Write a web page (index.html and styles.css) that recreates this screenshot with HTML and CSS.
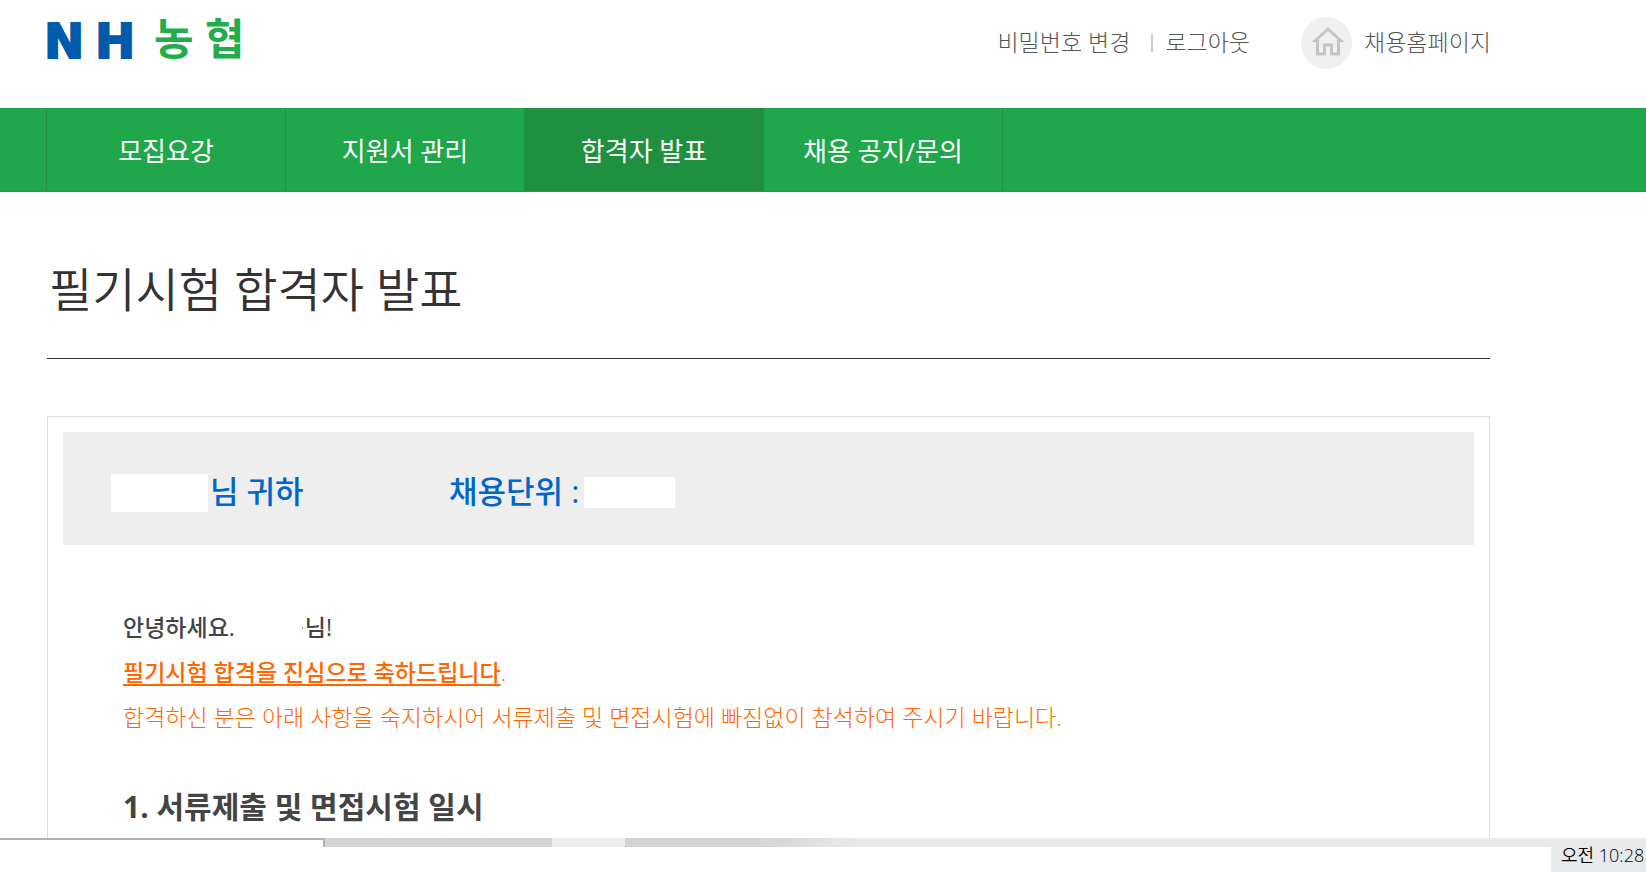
FILE: index.html
```
<!DOCTYPE html>
<html lang="ko">
<head>
<meta charset="utf-8">
<title>필기시험 합격자 발표</title>
<link rel="stylesheet" href="styles.css">
</head>
<body>
<div class="page">
  <header class="header">
    <a class="logo" href="#" aria-label="NH농협">
      <svg width="208" height="68" viewBox="0 -16 208 68" aria-hidden="true">
        <text class="logo-latin" y="35"><tspan x="-3">N</tspan><tspan x="48">H</tspan></text>
        <text class="logo-hangul" y="32"><tspan x="107">농</tspan><tspan x="158">협</tspan></text>
      </svg>
    </a>
    <nav class="utility">
      <a href="#">비밀번호 변경</a>
      <span class="divider"></span>
      <a href="#">로그아웃</a>
      <a class="home" href="#">
        <svg class="home-icon" width="51" height="52" viewBox="0 0 51 52" aria-hidden="true">
          <ellipse cx="25.500" cy="26" rx="25.500" ry="26" fill="#f0f0f0"/>
          <path d="M14.500 23.500 27 12l12.500 11.500H37.500V37H30.500V28H23.500V37H16.500V23.500Z" fill="none" stroke="#c4c4c4" stroke-width="3"/>
        </svg>
        <span>채용홈페이지</span>
      </a>
    </nav>
  </header>
  <nav class="menu">
    <a href="#">모집요강</a>
    <a href="#">지원서 관리</a>
    <a class="active" href="#" aria-current="page">합격자 발표</a>
    <a href="#">채용 공지/문의</a>
  </nav>
  <main class="main">
    <h1 class="title">필기시험 합격자 발표</h1>
    <section class="card">
      <div class="recipient">
        <p class="recipient-name"><span class="mask mask-name"></span>님 귀하</p>
        <p class="recipient-unit">채용단위 :<span class="mask mask-unit"></span></p>
      </div>
      <div class="notice">
        <p class="strong">안녕하세요.<span class="blank"></span>님!</p>
        <p class="accent"><strong class="congrats">필기시험 합격을 진심으로 축하드립니다</strong>.</p>
        <p class="accent">합격하신 분은 아래 사항을 숙지하시어 서류제출 및 면접시험에 빠짐없이 참석하여 주시기 바랍니다.</p>
        <h2 class="subtitle">1. 서류제출 및 면접시험 일시</h2>
      </div>
    </section>
  </main>
</div>
<footer class="taskbar">
  <div class="search"></div>
  <div class="apps"><span class="app-active"></span></div>
  <time class="clock">오전 10:28</time>
</footer>
</body>
</html>
```
FILE: styles.css
```
* { box-sizing: border-box; }

body {
  margin: 0;
  height: 100vh;
  display: flex;
  flex-direction: column;
  overflow: hidden;
  background: #fff;
  color: #444;
  font-family: "Open Sans", "Noto Sans CJK KR", sans-serif;
  font-size: 23px;
  font-weight: 300;
}

h1, h2, p { margin: 0; }
a { color: inherit; text-decoration: none; }

.page { flex: 1; min-height: 0; overflow: hidden; }

.header {
  display: flex;
  justify-content: space-between;
  align-items: flex-start;
  height: 108px;
  padding: 7px 155px 0 47px;
}
.logo svg { display: block; overflow: visible; }
.logo-latin {
  font: bold 48px "DejaVu Sans", sans-serif;
  fill: #005bac;
  stroke: #005bac;
  stroke-width: 2px;
}
.logo-hangul { font: bold 43px "Noto Sans CJK KR", sans-serif; fill: #22ac4b; }

.utility {
  display: flex;
  align-items: center;
  height: 52px;
  margin-top: 10px;
  color: #555;
  line-height: 32px;
  white-space: nowrap;
}
.utility > a:not(.home), .home span { padding-bottom: 2px; }
.divider { width: 2px; height: 18px; margin: 0 12px 0 21px; background: #ccc; }
.home { display: flex; align-items: center; gap: 12px; margin-left: 51px; }

.menu {
  display: flex;
  height: 84px;
  padding-left: 46px;
  background: #20a64b;
  border-bottom: 1px solid #1f9e48;
  color: #fff;
  font-size: 26px;
  font-weight: 400;
}
.menu a {
  display: flex;
  justify-content: center;
  align-items: center;
  width: 239px;
  border-left: 1px solid #1f9242;
}
.menu a:last-child { width: 240px; border-right: 1px solid #1f9242; }
.menu .active { background: #1f8f40; }

.main { padding: 0 156px 0 47px; }
.title {
  padding: 60px 0 32px 2px;
  border-bottom: 1px solid #333;
  color: #333;
  font-size: 47px;
  font-weight: 350;
  line-height: 74px;
}

.card {
  margin-top: 57px;
  min-height: 600px;
  padding: 15px;
  border: 1px solid #ddd;
}
.recipient {
  display: flex;
  height: 113px;
  padding: 2px 48px 0;
  align-items: center;
  background: #eee;
  color: #06c;
  font-size: 31px;
  font-weight: 500;
}
.recipient p { display: flex; align-items: center; }
.recipient-name { width: 338px; }
.mask { margin-top: 6px; background: #fff; }
.mask-name { width: 97px; height: 38px; margin-right: 2px; }
.mask-unit { width: 91px; height: 31px; margin-left: 5px; }

.notice { padding: 60px 60px 0; line-height: 45px; }
.strong { font-weight: 500; }
.blank {
  display: inline-block;
  width: 70px;
  height: 9px;
  border-right: 2px solid #fff;
  background: linear-gradient(#4a90d9, #4a90d9) right top / 1px 2px no-repeat;
}
.accent { color: #f60; }
.congrats {
  font-weight: 500;
  text-decoration: underline;
  text-decoration-thickness: 2px;
  text-underline-offset: 3px;
}
.subtitle { margin-top: 44px; font-size: 30px; font-weight: 700; }

.taskbar {
  display: flex;
  align-items: flex-start;
  height: 34px;
  background: #fff;
}
.search {
  width: 325px;
  height: 9px;
  border-top: 2px solid #b3b3b3;
  border-right: 2px solid #b3b3b3;
}
.apps {
  flex: 1;
  height: 9px;
  padding-left: 227px;
  background: linear-gradient(90deg, #d3d3d3 430px, #e8e9ea 530px);
}
.app-active { display: block; width: 73px; height: 9px; background: #ededed; }
.clock {
  width: 95px;
  height: 34px;
  padding-left: 10px;
  background: #e8e9ea;
  color: #000;
  font-size: 18px;
  font-weight: 350;
  line-height: 34px;
  white-space: nowrap;
}
```
